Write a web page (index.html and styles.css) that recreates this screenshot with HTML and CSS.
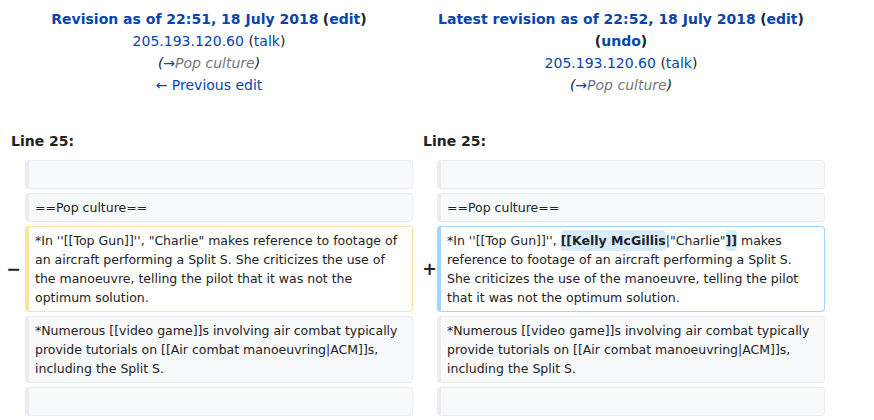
FILE: index.html
```html
<!DOCTYPE html>
<html lang="en">
<head>
<meta charset="utf-8">
<title>Split S: Difference between revisions</title>
<link rel="stylesheet" href="styles.css">
</head>
<body>
<div class="diff">
  <div class="title">
    <div><a class="strong" href="#">Revision as of 22:51, 18 July 2018</a> <span class="strong">(<a href="#">edit</a>)</span></div>
    <div><a href="#">205.193.120.60</a> (<a href="#">talk</a>)</div>
    <div><span class="comment">(<a href="#">→</a><span class="autocomment">Pop culture</span>)</span></div>
    <div><a href="#">← Previous edit</a></div>
  </div>
  <div class="title">
    <div><a class="strong" href="#">Latest revision as of 22:52, 18 July 2018</a> <span class="strong">(<a href="#">edit</a>)</span> <span class="strong">(<a href="#">undo</a>)</span></div>
    <div><a href="#">205.193.120.60</a> (<a href="#">talk</a>)</div>
    <div><span class="comment">(<a href="#">→</a><span class="autocomment">Pop culture</span>)</span></div>
  </div>

  <div class="lineno">Line 25:</div>
  <div class="lineno">Line 25:</div>

  <div class="marker"></div>
  <div class="line context"><br></div>
  <div class="marker"></div>
  <div class="line context"><br></div>

  <div class="marker"></div>
  <div class="line context">==Pop culture==</div>
  <div class="marker"></div>
  <div class="line context">==Pop culture==</div>

  <div class="marker del">−</div>
  <div class="line deleted">*In ''[[Top Gun]]'', "Charlie" makes reference to footage of an aircraft performing a Split S. She criticizes the use of the manoeuvre, telling the pilot that it was not the optimum solution.</div>
  <div class="marker ins">+</div>
  <div class="line added">*In ''[[Top Gun]]'', <ins class="change">[[Kelly McGillis</ins>|"Charlie"<ins class="change">]]</ins> makes reference to footage of an aircraft performing a Split S. She criticizes the use of the manoeuvre, telling the pilot that it was not the optimum solution.</div>

  <div class="marker"></div>
  <div class="line context">*Numerous [[video game]]s involving air combat typically provide tutorials on [[Air combat manoeuvring|ACM]]s, including the Split S.</div>
  <div class="marker"></div>
  <div class="line context">*Numerous [[video game]]s involving air combat typically provide tutorials on [[Air combat manoeuvring|ACM]]s, including the Split S.</div>

  <div class="marker"></div>
  <div class="line context"><br></div>
  <div class="marker"></div>
  <div class="line context"><br></div>
</div>
</body>
</html>
```

FILE: styles.css
```css
html, body {
  margin: 0;
  padding: 0;
  background: #ffffff;
}

body {
  font-family: "DejaVu Sans", sans-serif;
  font-size: 14px;
  line-height: 22px;
  color: #222222;
}

a {
  color: #0645ad;
  text-decoration: none;
}

.diff {
  display: grid;
  grid-template-columns: 16px 388px 16px 388px;
  column-gap: 4px;
  row-gap: 4px;
  padding: 8px 0 0 5px;
}

.title {
  grid-column: span 2;
  text-align: center;
  padding: 0 4px;
}

.strong {
  font-weight: bold;
}

.comment {
  font-style: italic;
}

.autocomment {
  color: #72777d;
}

.lineno {
  grid-column: span 2;
  font-weight: bold;
  padding: 30px 6px 4px;
}

.marker {
  display: flex;
  align-items: center;
  justify-content: flex-end;
  font-weight: bold;
  font-size: 17.5px;
  line-height: 21px;
}

.marker.ins {
  margin-right: -4px;
}

.line {
  font-size: 12.5px;
  line-height: 19px;
  white-space: pre-wrap;
  word-wrap: break-word;
  border-style: solid;
  border-width: 1px 1px 1px 4px;
  border-radius: 4px;
  padding: 4px 7px 4px 6px;
}

.context {
  background: #f8f9fa;
  border-color: #eaecf0;
}

.deleted {
  border-color: #ffe49c;
}

.added {
  border-color: #a3d3ff;
}

.change {
  text-decoration: none;
  font-weight: bold;
  background: #d8ecff;
  border-radius: 4px;
  padding: 3px 0;
}
```
